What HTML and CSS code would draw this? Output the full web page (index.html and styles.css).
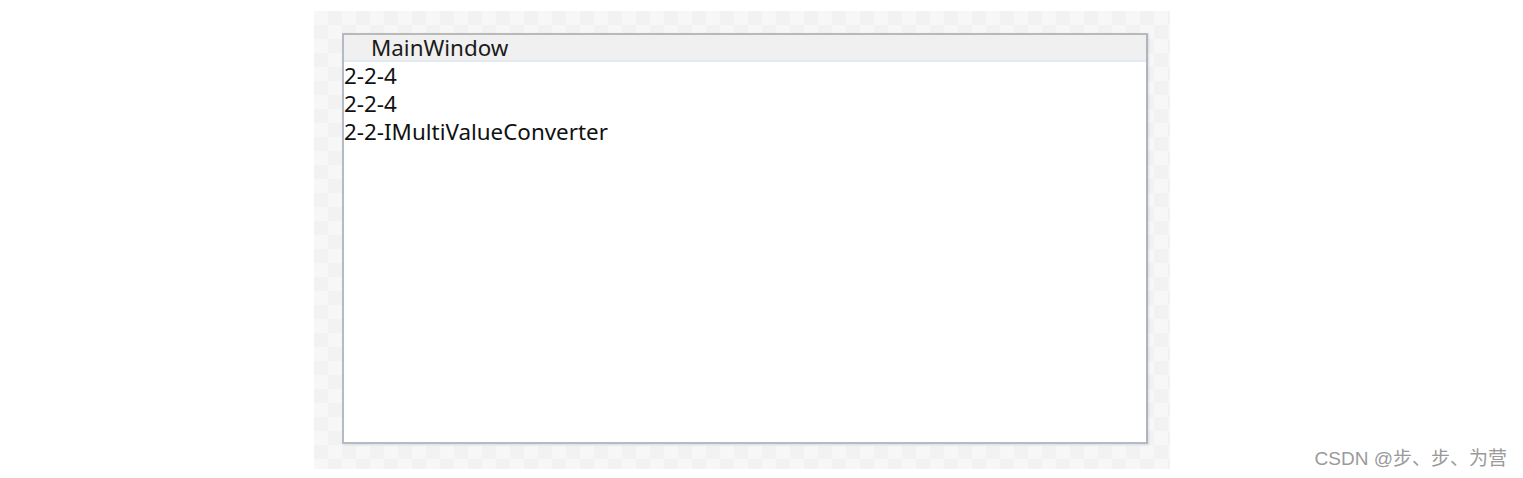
FILE: index.html
```html
<!DOCTYPE html>
<html>
<head>
<meta charset="utf-8">
<link rel="stylesheet" href="styles.css">
</head>
<body>
<div class="page">
  <div class="canvas">
    <div class="window">
      <div class="titlebar"><span class="title">MainWindow</span></div>
      <div class="content">
        <div class="line">2-2-4</div>
        <div class="line">2-2-4</div>
        <div class="line">2-2-IMultiValueConverter</div>
      </div>
    </div>
  </div>
  <div class="watermark">CSDN @步、步、为营</div>
</div>
</body>
</html>
```
FILE: styles.css
```css
html, body {
  margin: 0;
  padding: 0;
  background: #ffffff;
}
.page {
  position: relative;
  width: 1523px;
  height: 478px;
  padding: 11px 0 0 314px;
  box-sizing: border-box;
}
.canvas {
  width: 856px;
  height: 458px;
  box-sizing: border-box;
  padding: 22px 0 0 28px;
  background-color: #f6f6f6;
  background-image: repeating-conic-gradient(#f2f2f2 0 25%, #f7f7f7 0 50%);
  background-size: 28px 28px;
}
.window {
  width: 806px;
  height: 411px;
  box-sizing: border-box;
  border: 2px solid #b4bac6;
  border-top-color: #b9b9b9;
  border-right-color: #b0b4bc;
  display: flex;
  flex-direction: column;
  background: #ffffff;
  box-shadow: 1px 1px 2px rgba(160,170,190,0.35);
}
.titlebar {
  height: 25px;
  background: #f0f0f0;
  border-bottom: 2px solid #e3eaf3;
  display: flex;
  align-items: center;
  padding-left: 27px;
  font-family: "Noto Sans", "Open Sans", sans-serif;
  font-size: 22.4px;
  color: #1b1b1b;
}
.title {
  line-height: 25px;
}
.content {
  flex: 1;
  font-family: "Noto Sans", "Open Sans", sans-serif;
  font-size: 22.4px;
  color: #111111;
}
.line {
  height: 28px;
  line-height: 28px;
}
.watermark {
  position: absolute;
  right: 16px;
  bottom: 8px;
  font-family: "Liberation Sans", "Noto Sans CJK SC", sans-serif;
  font-size: 19px;
  color: #9a9a9a;
}
```
